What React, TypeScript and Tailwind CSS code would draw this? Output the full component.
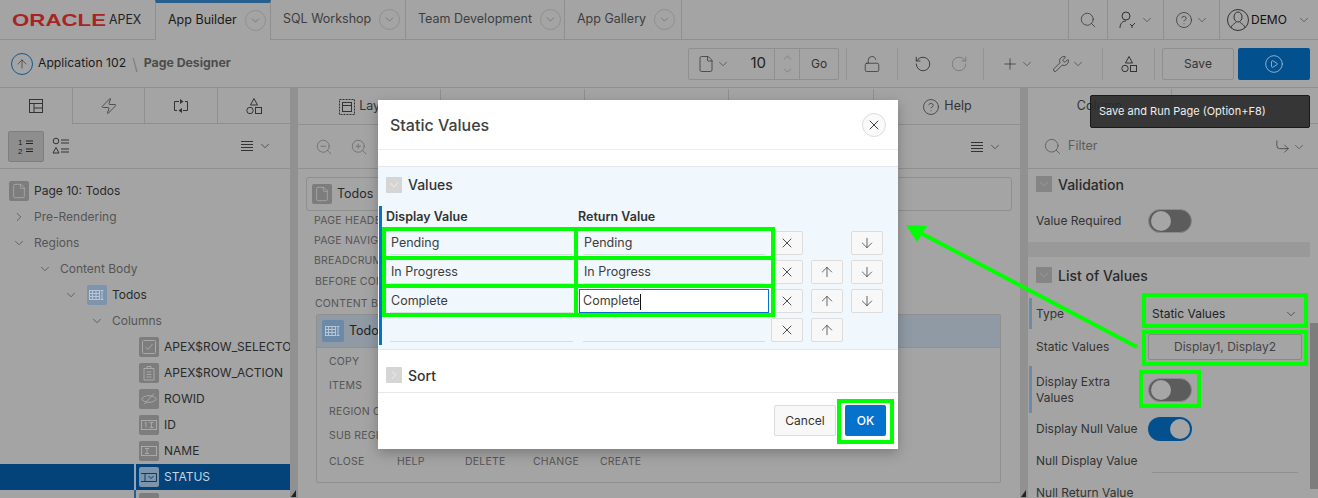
import { ArrowDown, ArrowUp, ChevronDown, ChevronRight, CirclePlay, CircleHelp, CornerDownRight, File, LockOpen, Plus, RotateCcw, RotateCw, Search, Wrench, X, Zap, ZoomIn, ZoomOut } from 'lucide-react';

const FONT = "font-['Inter','Noto_Sans',sans-serif]";

// triangle + circle + square icon used in the toolbar and gallery tab
const ShapesIcon = ({ className = 'text-[#333]' }: { className?: string }) => (
  <svg width="20" height="20" viewBox="0 0 20 20" fill="none" stroke="currentColor" strokeWidth="1" className={className}>
    <path d="M10 2.5 L13.5 9 H6.5 Z" />
    <circle cx="6" cy="14.5" r="3.2" />
    <rect x="11.5" y="11.5" width="6" height="6" />
  </svg>
);

const LinesIcon = () => (
  <svg width="14" height="12" viewBox="0 0 14 12" stroke="#333" strokeWidth="1">
    <path d="M1 1.5H13M1 4.5H13M1 7.5H13M1 10.5H13" />
  </svg>
);

const MenuDrop = ({ className = '' }: { className?: string }) => (
  <div className={`flex items-center gap-1 ${className}`}>
    <LinesIcon />
    <ChevronDown size={14} strokeWidth={1.2} className="text-[#333]" />
  </div>
);

const HeaderTab = ({ label, active, width }: { label: string; active?: boolean; width: string }) => (
  <div className={`${width} flex items-center pl-3 gap-2 border-r border-[#8f8f8f] whitespace-nowrap ${active ? 'h-[calc(100%+1px)] bg-[#a4a4a4] border-t-[3px] border-t-[#27608f] pb-[3px]' : 'h-full'}`}>
    <span className={`text-[12.5px] ${active ? 'text-[#1a1a1a]' : 'text-[#3e3e3e]'}`}>{label}</span>
    <span className="w-[21px] h-[21px] rounded-full border border-[#8f8f8f] flex items-center justify-center shrink-0">
      <ChevronDown size={13} strokeWidth={1} className="text-[#555]" />
    </span>
  </div>
);

const ToolDivider = () => <div className="w-px h-[32px] bg-[#949494]" />;

const TreeIcon = ({ children, active }: { children?: React.ReactNode; active?: boolean }) => (
  <span className={`w-5 h-5 rounded-[2px] flex items-center justify-center shrink-0 ${active ? 'bg-[#7c94ac]' : 'bg-[#7d7d7d]'}`}>{children}</span>
);

const TableIcon = () => (
  <svg width="16" height="14" viewBox="0 0 16 14" fill="none" stroke="#b9c6d4" strokeWidth="1">
    <rect x="0.5" y="2.5" width="10" height="9" />
    <path d="M0.5 5.5H10.5M0.5 8.5H10.5M3.5 2.5V11.5M7 2.5V11.5M13 2.5V11.5M11.5 2.5H14.5M11.5 11.5H14.5" />
  </svg>
);

const ColIcon = ({ kind }: { kind: string }) => {
  const stroke = '#a9a9a9';
  return (
    <TreeIcon>
      <svg width="16" height="16" viewBox="0 0 16 16" fill="none" stroke={stroke} strokeWidth="1">
        {kind === 'check' && <><rect x="1.5" y="1.5" width="13" height="13" rx="1" /><path d="M4.5 8L7 10.5L11.5 5" /></>}
        {kind === 'clip' && <><path d="M3 3.5H13V15H3Z" /><path d="M6 1.5H10V3.5H6ZM5.5 7H10.5M5.5 9.5H10.5M5.5 12H10.5" /></>}
        {kind === 'eye' && <><path d="M0.5 8C4 3.5 12 3.5 15.5 8C12 12.5 4 12.5 0.5 8Z" /><path d="M3 13.5L13 2.5" /></>}
        {kind === 'num' && <><rect x="0.5" y="3.5" width="15" height="9" /><path d="M3.5 6L5 5.5V10.5M8.5 5.5H12.5M10.5 5.5V10.5M8.5 10.5H12.5" /></>}
        {kind === 'text' && <><rect x="0.5" y="3.5" width="15" height="9" /><path d="M4 5.5H8M6 5.5V10.5M4 10.5H8" /></>}
      </svg>
    </TreeIcon>
  );
};

const Tree = () => {
  const cols = [
    { kind: 'check', label: 'APEX$ROW_SELECTOR' },
    { kind: 'clip', label: 'APEX$ROW_ACTION' },
    { kind: 'eye', label: 'ROWID' },
    { kind: 'num', label: 'ID' },
    { kind: 'text', label: 'NAME' },
  ];
  return (
    <div className="pt-[9px] text-[12px] overflow-hidden">
      <div className="h-[26px] flex items-center pl-[9px] gap-[5px] text-[#2a2a2a]">
        <TreeIcon><File size={16} strokeWidth={1} className="text-[#b5b5b5]" /></TreeIcon>
        Page 10: Todos
      </div>
      <div className="h-[26px] flex items-center pl-[12px] gap-[8px] text-[#555]">
        <ChevronRight size={14} strokeWidth={1} className="text-[#333]" />
        Pre-Rendering
      </div>
      <div className="h-[26px] flex items-center pl-[12px] gap-[8px] text-[#555]">
        <ChevronDown size={14} strokeWidth={1} className="text-[#333]" />
        Regions
      </div>
      <div className="h-[26px] flex items-center pl-[38px] gap-[8px] text-[#555]">
        <ChevronDown size={14} strokeWidth={1} className="text-[#333]" />
        Content Body
      </div>
      <div className="h-[26px] flex items-center pl-[64px] gap-[9px] text-[#2a2a2a]">
        <ChevronDown size={14} strokeWidth={1} className="text-[#333]" />
        <span className="flex items-center gap-[5px]"><TreeIcon active><TableIcon /></TreeIcon>Todos</span>
      </div>
      <div className="h-[26px] flex items-center pl-[90px] gap-[8px] text-[#555]">
        <ChevronDown size={14} strokeWidth={1} className="text-[#333]" />
        Columns
      </div>
      {cols.map((c) => (
        <div key={c.label} className="h-[26px] flex items-center pl-[139px] gap-[5px] text-[#2a2a2a] whitespace-nowrap">
          <ColIcon kind={c.kind} />
          {c.label}
        </div>
      ))}
      <div className="h-[26px] flex items-center pl-[134px] bg-[#03437a] text-[#c9d4de]">
        <span className="w-[2px] h-full bg-[#8fa6bb] mr-[3px]" />
        <span className="w-5 h-5 rounded-[2px] bg-[#7c94ac] flex items-center justify-center shrink-0 mr-[5px]">
          <svg width="16" height="16" viewBox="0 0 16 16" fill="none" stroke="#0b3a63" strokeWidth="1">
            <path d="M0 4.5H15.5V12.5H0M4 4.5V12.5M7.5 7L10 9.5L12.5 7" />
          </svg>
        </span>
        STATUS
      </div>
      <div className="h-[26px] flex items-center pl-[134px]">
        <span className="w-[2px] h-full bg-[#27608f] mr-[3px]" />
        <TreeIcon />
      </div>
    </div>
  );
};

const GridLabel = ({ children, className = '' }: { children: React.ReactNode; className?: string }) => (
  <div className={`text-[10.5px] text-[#555] tracking-[0.2px] whitespace-nowrap ${className}`}>{children}</div>
);

const CollapseIcon = ({ open, light }: { open?: boolean; light?: boolean }) => (
  <span className={`w-4 h-4 rounded-[1px] flex items-center justify-center shrink-0 ${light ? 'bg-[#d5d5d5]' : 'bg-[#858585]'}`}>
    {open ? (
      <ChevronDown size={14} strokeWidth={1} className={light ? 'text-white' : 'text-[#a8a8a8]'} />
    ) : (
      <ChevronRight size={14} strokeWidth={1} className="text-white" />
    )}
  </span>
);

const Toggle = ({ on }: { on?: boolean }) => (
  <span className={`w-[44px] h-[24px] rounded-full flex items-center px-[2px] ${on ? 'bg-[#03508f] justify-end' : 'bg-[#5c5c5c] border border-[#8a8a8a] justify-start'}`}>
    <span className="w-5 h-5 rounded-full bg-[#a6a6a6]" />
  </span>
);

const PropRow = ({ label, height, bar, children }: { label: string; height: string; bar?: boolean; children?: React.ReactNode }) => (
  <div className={`${height} flex items-center relative pl-2 pt-[1px]`}>
    {bar && <span className="w-[3px] h-full bg-[#6f8aa5] absolute left-[1px] top-0" />}
    <span className="w-[112px] text-[12px] leading-[16px] text-[#333] shrink-0 whitespace-pre-line">{label}</span>
    {children}
  </div>
);

const SmallBtn = ({ children, hidden }: { children?: React.ReactNode; hidden?: boolean }) => (
  <span className={`w-8 h-6 rounded-[2px] flex items-center justify-center shrink-0 ${hidden ? '' : 'border border-[#dcdcdc] bg-[#f8f8f8]'}`}>{children}</span>
);

const ValueRow = ({ display, ret, focused, up, down }: { display: string; ret: string; focused?: boolean; up?: boolean; down?: boolean }) => (
  <div className="h-[29px] flex items-center text-[12.5px] text-[#3d3d3d]">
    <div className="w-[183px] ml-[8px] h-6 flex items-center pl-px pt-[3px] border-b border-[#d7dde2]">{display}</div>
    {focused ? (
      <div className="w-[190px] ml-[6px] mr-[2px] h-6 flex items-center pl-[3px] pt-[2px] bg-white border border-[#0572ce]">
        {ret}
        <span className="w-px h-4 bg-[#111]" />
      </div>
    ) : (
      <div className="w-[182px] ml-[10px] mr-[6px] h-6 flex items-center pl-px pt-[3px] border-b border-[#d7dde2]">{ret}</div>
    )}
    <div className="flex gap-2">
      <SmallBtn><X size={16} strokeWidth={1.3} className="text-[#333]" /></SmallBtn>
      <SmallBtn hidden={!up}>{up && <ArrowUp size={16} strokeWidth={1.1} className="text-[#333]" />}</SmallBtn>
      <SmallBtn hidden={!down}>{down && <ArrowDown size={16} strokeWidth={1.1} className="text-[#333]" />}</SmallBtn>
    </div>
  </div>
);

const StaticValuesDialog = () => (
  <div className="absolute left-[378px] top-[100px] w-[520px] h-[349px] bg-white shadow-[0_4px_12px_rgba(0,0,0,0.25)] flex flex-col">
    <div className="h-[50px] flex items-center justify-between pl-3 pr-3 border-b border-[#ececec] shrink-0">
      <span className="text-[16px] font-medium text-[#404040]">Static Values</span>
      <span className="w-6 h-6 rounded-full border border-[#dcdcdc] bg-[#fafafa] flex items-center justify-center">
        <X size={16} strokeWidth={1.4} className="text-[#333]" />
      </span>
    </div>
    <div className="h-4 shrink-0" />
    <div className="h-[183px] bg-[#f0f7fd] border-t border-[#e3e9ee] shrink-0">
      <div className="h-[35px] pl-2 flex items-center gap-[6px] text-[14px] font-medium text-[#333]">
        <CollapseIcon open light />
        Values
      </div>
      <div className="ml-px mt-[4px] border-l-[3px] border-[#0572ce] h-[139px]">
        <div className="h-[22px] pt-[1px] flex items-center text-[12.5px] font-semibold text-[#333]">
          <span className="w-[196px] pl-[4px]">Display Value</span>
          <span>Return Value</span>
        </div>
        <ValueRow display="Pending" ret="Pending" down />
        <ValueRow display="In Progress" ret="In Progress" up down />
        <ValueRow display="Complete" ret="Complete" focused up down />
        <ValueRow display="" ret="" up />
      </div>
    </div>
    <div className="h-[44px] pl-2 pt-2 flex items-center gap-[6px] text-[14px] font-medium text-[#333] border-t border-b border-[#e8e8e8] shrink-0">
      <CollapseIcon light />
      Sort
    </div>
    <div className="flex-1 flex items-center justify-end gap-[9px] pr-3 pb-[1px]">
      <span className="w-[62px] h-[31px] rounded-[2px] border border-[#dcdcdc] bg-[#f8f8f8] flex items-center justify-center text-[12px] text-[#333]">Cancel</span>
      <span className="w-[41px] h-[31px] rounded-[2px] bg-[#0572ce] flex items-center justify-center text-[12px] font-medium text-white">OK</span>
    </div>
  </div>
);

// the green marks somebody drew over the screenshot
const Annotations = () => {
  const boxes = [
    'left-[382px] top-[227px] w-[196px] h-[33px]',
    'left-[574px] top-[227px] w-[201px] h-[33px]',
    'left-[382px] top-[256px] w-[196px] h-[32px]',
    'left-[574px] top-[256px] w-[201px] h-[32px]',
    'left-[382px] top-[284px] w-[196px] h-[33px]',
    'left-[574px] top-[284px] w-[201px] h-[33px]',
    'left-[837px] top-[399px] w-[57px] h-[45px]',
    'left-[1142px] top-[293px] w-[166px] h-[35px]',
    'left-[1142px] top-[330px] w-[166px] h-[36px]',
    'left-[1139px] top-[370px] w-[62px] h-[38px]',
  ];
  return (
    <>
      {boxes.map((b) => (
        <div key={b} className={`absolute border-4 border-[#00ff00] ${b}`} />
      ))}
      <svg className="absolute left-0 top-0" width="1318" height="498" fill="#00ff00" stroke="none">
        <path d="M1137 347 L915 230" stroke="#00ff00" strokeWidth="4" />
        <path d="M906 225 L927 226 L917 242 Z" />
      </svg>
    </>
  );
};

const Gutter = () => (
  <div className="w-[8px] bg-[#919191] shrink-0 flex items-end pb-[1px] pl-[1px]">
    <svg width="5" height="7" viewBox="0 0 5 7" fill="#222"><path d="M5 0V7H0Z" /></svg>
  </div>
);

export default function App() {
  return (
    <div className={`relative w-[1318px] h-[498px] overflow-hidden bg-[#a4a4a4] text-[#333] ${FONT}`}>
      {/* top nav */}
      <header className="h-[40px] flex border-b border-[#8f8f8f]">
        <div className="w-[155px] flex items-center pl-3 gap-[3px]">
          <svg width="94" height="16" viewBox="0 0 94 16">
            <text x="0" y="14" textLength="94" lengthAdjust="spacingAndGlyphs" fontFamily="Liberation Sans" fontSize="17" fontWeight="700" fill="#a82424">ORACLE</text>
          </svg>
          <span className="text-[13px] text-[#222] scale-x-95 origin-left">APEX</span>
        </div>
        <HeaderTab label="App Builder" width="w-[116px] border-l" active />
        <HeaderTab label="SQL Workshop" width="w-[135px]" />
        <HeaderTab label="Team Development" width="w-[159px]" />
        <HeaderTab label="App Gallery" width="w-[117px]" />
        <div className="ml-auto flex h-full">
          <div className="w-[39px] flex items-center justify-center border-l border-[#8f8f8f]"><Search size={18} strokeWidth={1} className="text-[#333]" /></div>
          <div className="w-[56px] flex items-center justify-center gap-[2px] border-l border-[#8f8f8f]">
            <svg width="20" height="20" viewBox="0 0 20 20" fill="none" stroke="#333" strokeWidth="1">
              <circle cx="8" cy="6" r="4" />
              <path d="M2 18C2 13 5 11 8 11M12 14L14 16L17 13M14 16V18" />
            </svg>
            <ChevronDown size={14} strokeWidth={1} className="text-[#333]" />
          </div>
          <div className="w-[56px] flex items-center justify-center gap-[2px] border-l border-[#8f8f8f]">
            <CircleHelp size={18} strokeWidth={1} className="text-[#333]" />
            <ChevronDown size={14} strokeWidth={1} className="text-[#333]" />
          </div>
          <div className="w-[99px] flex items-center pl-[7px] border-l border-[#8f8f8f]">
            <svg width="22" height="24" viewBox="0 0 22 24" fill="none" stroke="#333" strokeWidth="1">
              <circle cx="11" cy="12" r="10.5" />
              <ellipse cx="11" cy="9" rx="4" ry="5" />
              <path d="M4 20C5 16 8 16 9 14M18 20C17 16 14 16 13 14" />
            </svg>
            <span className="text-[12px] text-[#111] ml-[2px]">DEMO</span>
            <ChevronDown size={14} strokeWidth={1} className="text-[#333] ml-[10px]" />
          </div>
        </div>
      </header>

      {/* page toolbar */}
      <div className="h-[48px] flex items-center justify-between pl-[11px] pr-2 border-b border-[#8f8f8f]">
        <div className="flex items-center">
          <span className="w-[22px] h-[22px] rounded-full border border-[#14598f] flex items-center justify-center">
            <ArrowUp size={14} strokeWidth={1} className="text-[#222]" />
          </span>
          <span className="text-[12.2px] text-[#1a1a1a] ml-[5px]">Application 102</span>
          <span className="text-[16px] text-[#777] font-light mx-[6px]">\</span>
          <span className="text-[12.3px] font-bold text-[#4c4c4c]">Page Designer</span>
        </div>
        <div className="flex items-center h-8">
          <div className="w-[151px] h-8 flex items-center rounded-[2px] border border-[#8f8f8f]">
            <File size={18} strokeWidth={1} className="text-[#333] ml-2" />
            <ChevronDown size={14} strokeWidth={1} className="text-[#333] ml-px" />
            <span className="ml-auto mr-2 text-[15px] text-[#222]">10</span>
            <div className="w-[25px] h-full flex flex-col items-center justify-center border-l border-[#8f8f8f]">
              <ChevronDown size={13} strokeWidth={1} className="text-[#666] rotate-180" />
              <ChevronDown size={13} strokeWidth={1} className="text-[#666]" />
            </div>
            <span className="w-[39px] h-full flex items-center justify-center border-l border-[#8f8f8f] text-[12px] text-[#333]">Go</span>
          </div>
          <div className="w-[7px]" />
          <ToolDivider />
          <div className="w-[50px] flex justify-center"><LockOpen size={18} strokeWidth={1} className="text-[#333]" /></div>
          <ToolDivider />
          <div className="w-[85px] flex justify-center gap-[18px]">
            <RotateCcw size={18} strokeWidth={1.2} className="text-[#333]" />
            <RotateCw size={18} strokeWidth={1.2} className="text-[#777]" />
          </div>
          <ToolDivider />
          <div className="w-[118px] flex items-center justify-center">
            <Plus size={18} strokeWidth={1} className="text-[#333]" />
            <ChevronDown size={14} strokeWidth={1} className="text-[#333] ml-[1px] mr-[18px]" />
            <Wrench size={18} strokeWidth={1} className="text-[#333]" />
            <ChevronDown size={14} strokeWidth={1} className="text-[#333] ml-[1px]" />
          </div>
          <ToolDivider />
          <div className="w-[51px] flex justify-center"><ShapesIcon /></div>
          <ToolDivider />
          <span className="ml-[7px] w-[72px] h-8 rounded-[2px] border border-[#8f8f8f] flex items-center justify-center text-[12px] text-[#333]">Save</span>
          <span className="ml-1 w-[72px] h-8 rounded-[2px] bg-[#03508f] flex items-center justify-center">
            <CirclePlay size={20} strokeWidth={1} className="text-[#a6bfd4]" />
          </span>
        </div>
      </div>

      {/* designer panes */}
      <div className="flex h-[410px]">
        {/* left */}
        <div className="w-[290px] shrink-0 flex flex-col">
          <div className="h-[36px] flex shrink-0">
            <div className="w-[72px] flex items-center justify-center">
              <svg width="16" height="14" viewBox="0 0 16 14" fill="none" stroke="#333" strokeWidth="1">
                <rect x="1.5" y="0.5" width="13" height="13" />
                <path d="M1.5 4.5H14.5M6 4.5V13.5M6 9H14.5" />
              </svg>
            </div>
            <div className="w-[72px] flex items-center justify-center border-l border-b border-[#8f8f8f]"><Zap size={18} strokeWidth={1} className="text-[#333]" /></div>
            <div className="w-[73px] flex items-center justify-center border-l border-b border-[#8f8f8f]">
              <svg width="16" height="16" viewBox="0 0 16 16" fill="none" stroke="#333" strokeWidth="1">
                <path d="M6 3.5H1.5V12.5H4M10 12.5H14.5V3.5H12" />
                <path d="M7 1L10.5 3.5L7 6ZM9 10L5.5 12.5L9 15Z" fill="#333" stroke="none" />
              </svg>
            </div>
            <div className="w-[73px] flex items-center justify-center border-l border-b border-[#8f8f8f]"><ShapesIcon /></div>
          </div>
          <div className="h-[45px] flex items-center pl-2 pr-[18px] border-b border-[#8f8f8f] shrink-0">
            <span className="w-[36px] h-[31px] rounded-[2px] bg-[#8e8e8e] border border-[#7f7f7f] flex items-center justify-center">
              <svg width="18" height="18" viewBox="0 0 18 18" stroke="#222" strokeWidth="1" fill="#222">
                <text x="1" y="8" fontSize="8" fontFamily="Liberation Sans" stroke="none">1</text>
                <text x="1" y="17" fontSize="8" fontFamily="Liberation Sans" stroke="none">2</text>
                <path d="M9 4H16M9 6.5H16M9 12H16M9 14.5H16" />
              </svg>
            </span>
            <svg width="18" height="18" viewBox="0 0 18 18" fill="none" stroke="#333" strokeWidth="1" className="ml-[8px]">
              <circle cx="4" cy="4" r="2.8" />
              <path d="M4 10.5L7 16H1ZM9 3H17M9 6H17M9 12H17M9 15H17" />
            </svg>
            <MenuDrop className="ml-auto" />
          </div>
          <Tree />
        </div>
        <Gutter />

        {/* center */}
        <div className="w-[722px] shrink-0 flex flex-col">
          <div className="h-[36px] pt-[1px] flex text-[12.5px] shrink-0">
            <div className="w-[143px] flex items-center justify-center gap-1 border-r border-[#8f8f8f]">
              <svg width="16" height="16" viewBox="0 0 16 16" fill="none" stroke="#333" strokeWidth="1">
                <rect x="0.5" y="0.5" width="15" height="15" strokeDasharray="2 1" />
                <rect x="3.5" y="3.5" width="9" height="9" />
                <path d="M3.5 6.5H12.5" />
              </svg>
              Layout
            </div>
            <div className="w-[144px] border-r border-[#8f8f8f]" />
            <div className="w-[144px] border-r border-[#8f8f8f]" />
            <div className="w-[145px] border-r border-[#8f8f8f]" />
            <div className="w-[146px] flex items-center justify-center gap-1">
              <CircleHelp size={18} strokeWidth={1} className="text-[#333]" />
              Help
            </div>
          </div>
          <div className="h-[45px] flex items-center pl-[17px] pr-[18px] gap-[17px] border-t border-b border-[#8f8f8f] shrink-0">
            <ZoomOut size={18} strokeWidth={1} className="text-[#666]" />
            <ZoomIn size={18} strokeWidth={1} className="text-[#666]" />
            <MenuDrop className="ml-auto" />
          </div>
          <div className="px-2 pt-2 flex-1 flex flex-col">
            <div className="h-[34px] shrink-0 rounded-[3px] border border-[#8f8f8f] flex items-center pl-[5px] gap-[5px] text-[12.5px] text-[#2a2a2a]">
              <TreeIcon><File size={16} strokeWidth={1} className="text-[#b5b5b5]" /></TreeIcon>
              Todos
            </div>
            <GridLabel className="ml-[8px] h-[20px] leading-[20px]">PAGE HEADER</GridLabel>
            <GridLabel className="ml-[8px] h-[20px] leading-[20px]">PAGE NAVIGATION</GridLabel>
            <GridLabel className="ml-[8px] h-[21px] leading-[20px]">BREADCRUMB BAR</GridLabel>
            <GridLabel className="ml-[9px] h-[22px] leading-[20px]">BEFORE CONTENT BODY</GridLabel>
            <GridLabel className="ml-[9px] h-[20px] leading-[20px]">CONTENT BODY</GridLabel>
            <div className="ml-[10px] mr-[11px] h-[169px] shrink-0 border border-[#8f8f8f] rounded-[2px]">
              <div className="h-[33px] bg-[#8f9aa5] flex items-center pl-[5px] gap-[5px] text-[12.5px] text-[#222] border-b border-[#8f8f8f]">
                <span className="w-[22px] h-[22px] bg-[#6b8aa8] rounded-[2px] flex items-center justify-center"><TableIcon /></span>
                Todos
              </div>
              <div className="pl-[12px] pt-[6px]">
                <GridLabel className="h-[24px] leading-[16px]">COPY</GridLabel>
                <GridLabel className="h-[26px] leading-[16px]">ITEMS</GridLabel>
                <GridLabel className="h-[24px] leading-[16px]">REGION CONTENT</GridLabel>
                <GridLabel className="h-[26px] leading-[16px]">SUB REGIONS</GridLabel>
                <div className="flex">
                  <GridLabel className="w-[68px] leading-[16px]">CLOSE</GridLabel>
                  <GridLabel className="w-[68px] leading-[16px]">HELP</GridLabel>
                  <GridLabel className="w-[68px] leading-[16px]">DELETE</GridLabel>
                  <GridLabel className="w-[67px] leading-[16px]">CHANGE</GridLabel>
                  <GridLabel className="leading-[16px]">CREATE</GridLabel>
                </div>
              </div>
            </div>
          </div>
        </div>
        <Gutter />

        {/* right */}
        <div className="flex-1 flex flex-col min-w-0">
          <div className="h-[36px] pt-[1px] flex text-[12.5px] shrink-0">
            <div className="w-[144px] flex items-center justify-center border-r border-[#8f8f8f]">Column</div>
            <div className="flex-1 border-b border-[#8f8f8f]" />
          </div>
          <div className="h-[45px] pt-[1px] flex items-center pl-[15px] pr-3 border-b border-[#8f8f8f] shrink-0">
            <Search size={19} strokeWidth={1} className="text-[#555]" />
            <span className="ml-[6px] text-[12.5px] text-[#5c5c5c]">Filter</span>
            <CornerDownRight size={17} strokeWidth={1} className="text-[#333] ml-auto" />
            <ChevronDown size={14} strokeWidth={1} className="text-[#333] ml-px" />
          </div>
          <div className="flex flex-1 min-h-0">
            <div className="flex-1 overflow-hidden">
              <div className="h-[30px] flex items-center pl-2 gap-[6px] text-[14px] font-medium text-[#2a2a2a]">
                <CollapseIcon open />
                Validation
              </div>
              <PropRow label="Value Required" height="h-[43px]"><Toggle /></PropRow>
              <div className="h-[15px] bg-[#999999]" />
              <div className="h-[36px] flex items-center pl-2 gap-[6px] text-[14px] font-medium text-[#2a2a2a]">
                <CollapseIcon open />
                List of Values
              </div>
              <div className="mt-[5px]">
                <PropRow label="Type" height="h-[31px]" bar>
                  <span className="w-[150px] ml-[4px] flex items-center justify-between pr-[4px] text-[12px] text-[#222]">
                    Static Values
                    <ChevronDown size={14} strokeWidth={1.2} className="text-[#333]" />
                  </span>
                </PropRow>
                <PropRow label="Static Values" height="h-[35px]">
                  <span className="w-[154px] h-[26px] rounded-[2px] border border-[#8a8a8a] bg-[#a4a4a4] flex items-center justify-center text-[12px] text-[#444]">Display1, Display2</span>
                </PropRow>
                <div className="mt-[2px]">
                  <PropRow label={'Display Extra\nValues'} height="h-[47px]" bar><Toggle /></PropRow>
                </div>
                <PropRow label="Display Null Value" height="h-[30px]"><Toggle on /></PropRow>
                <PropRow label="Null Display Value" height="h-[34px]">
                  <span className="w-[146px] ml-[4px] mt-[24px] h-px bg-[#8f8f8f]" />
                </PropRow>
                <PropRow label="Null Return Value" height="h-[30px]" />
              </div>
            </div>
            <div className="w-[8px] shrink-0 pt-[154px]">
              <div className="h-[166px] bg-[#7d7d7d]" />
            </div>
          </div>
        </div>
      </div>

      <StaticValuesDialog />

      {/* tooltip for the run button */}
      <div className="absolute left-[1090px] top-[95px] w-[220px] h-[33px] rounded-[2px] bg-[#2a2a2a]/90 border border-[#1a1a1a] pl-2 pt-[8px] text-[11px] leading-[15px] text-[#eeeeee]">
        Save and Run Page (Option+F8)
      </div>

      <Annotations />
    </div>
  );
}
